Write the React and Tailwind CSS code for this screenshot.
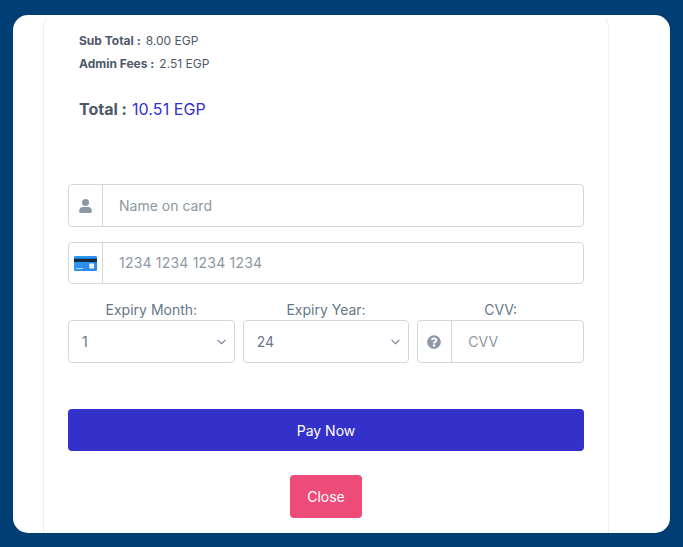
import React from "react";
import { FaQuestionCircle } from "react-icons/fa";

const UserIcon = () => (
    <svg width="13" height="14" viewBox="0 0 13 14" fill="currentColor" className="shrink-0">
        <circle cx="6.5" cy="3.5" r="3.5" />
        <path d="M0.2 11.6 C0.2 9.5 1.7 8 3.8 8 H9.2 C11.3 8 12.8 9.5 12.8 11.6 V12.7 C12.8 13.4 12.3 13.9 11.6 13.9 H1.4 C0.7 13.9 0.2 13.4 0.2 12.7 Z" />
    </svg>
);

const CardIcon = () => (
    <svg width="23" height="15" viewBox="0 0 23 15" className="shrink-0">
        <defs>
            <linearGradient id="card-face" x1="0" y1="0" x2="1" y2="1">
                <stop offset="0" stopColor="#2a9df5" />
                <stop offset="1" stopColor="#2e82ea" />
            </linearGradient>
        </defs>
        <rect width="23" height="15" rx="1.3" fill="url(#card-face)" />
        <rect y="2.7" width="23" height="3.3" fill="#17293b" />
        <rect x="15.3" y="7.4" width="4.8" height="5" rx="0.6" fill="#f1f7fd" />
        <rect x="17.2" y="9.2" width="1.2" height="1.4" fill="#c5def5" />
        <rect x="2" y="12" width="7" height="1.1" fill="#a9d6fa" />
    </svg>
);

const Chevron = () => (
    <svg width="9" height="6" viewBox="0 0 9 6" fill="none" stroke="#748194" strokeWidth="1.2" className="shrink-0">
        <path d="M0.6 0.8 L4.5 4.7 L8.4 0.8" />
    </svg>
);

const IconInput = ({ icon, placeholder, height, inputClass = "" }) => (
    <div className={`flex w-full overflow-hidden rounded border border-[#d3d8dd] ${height}`}>
        <span className="flex w-[34px] shrink-0 items-center justify-center border-r border-[#d3d8dd] pr-px text-[#8c98a4]">{icon}</span>
        <input
            type="text"
            placeholder={placeholder}
            className={`min-w-0 flex-1 px-4 text-[14px] text-[#677788] outline-none placeholder:text-[#8c98a4] placeholder:opacity-100 ${inputClass}`}
        />
    </div>
);

const Field = ({ label, children }) => (
    <div className="flex min-w-0 flex-1 flex-col text-center">
        <label className="h-[21px] text-[14px] leading-[21px] text-[#677788]">{label}</label>
        {children}
    </div>
);

const SelectBox = ({ value }) => (
    <button type="button" className="flex h-[43px] items-center justify-between rounded border border-[#d3d8dd] pl-[13px] pr-[8px] text-[14px] text-[#677788]">
        <span>{value}</span>
        <Chevron />
    </button>
);

const SummaryRow = ({ label, value }) => (
    <p className="text-[12px] leading-[23px] text-[#4e5968]">
        <span className="mr-[5px] font-bold">{label} :</span>
        {value}
    </p>
);

export default function App() {
    return (
        <div className="h-[547px] w-[683px] bg-[#003e74] px-[13px] pt-[15px] pb-[14px] font-['Inter',sans-serif]">
            <div className="h-full overflow-hidden rounded-[15px] bg-white pl-[30px]">
                <div className="h-[540px] w-[566px] rounded-t-xl border border-t-transparent border-[#edeff1] px-6">
                    <div className="px-[11px] pt-[13px]">
                        <SummaryRow label="Sub Total" value="8.00 EGP" />
                        <SummaryRow label="Admin Fees" value="2.51 EGP" />
                        <p className="mt-[22px] text-[16px] leading-6 tracking-[0.1px] text-[#3431cb]">
                            <span className="mr-[5px] font-bold tracking-normal text-[#4e5968]">Total :</span>
                            10.51 EGP
                        </p>
                    </div>

                    <div className="mt-[63px] flex flex-col">
                        <IconInput icon={<UserIcon />} placeholder="Name on card" height="h-[43px]" />
                        <div className="mt-[15px]">
                            <IconInput icon={<CardIcon />} placeholder="1234 1234 1234 1234" height="h-[42px]" inputClass="pb-px tracking-[0.2px]" />
                        </div>
                        <div className="mt-[15px] flex gap-2">
                            <Field label="Expiry Month:">
                                <SelectBox value="1" />
                            </Field>
                            <Field label="Expiry Year:">
                                <SelectBox value="24" />
                            </Field>
                            <Field label="CVV:">
                                <IconInput icon={<FaQuestionCircle size={14} />} placeholder="CVV" height="h-[43px]" />
                            </Field>
                        </div>
                    </div>

                    <button type="button" className="mt-[46px] flex h-[42px] w-full items-center justify-center rounded bg-[#3431cb] text-[14px] text-white">Pay Now</button>
                    <button type="button" className="mx-auto mt-6 flex h-[43px] w-[72px] items-center justify-center rounded bg-[#ed4c78] text-[14px] text-white">Close</button>
                </div>
            </div>
        </div>
    );
}
